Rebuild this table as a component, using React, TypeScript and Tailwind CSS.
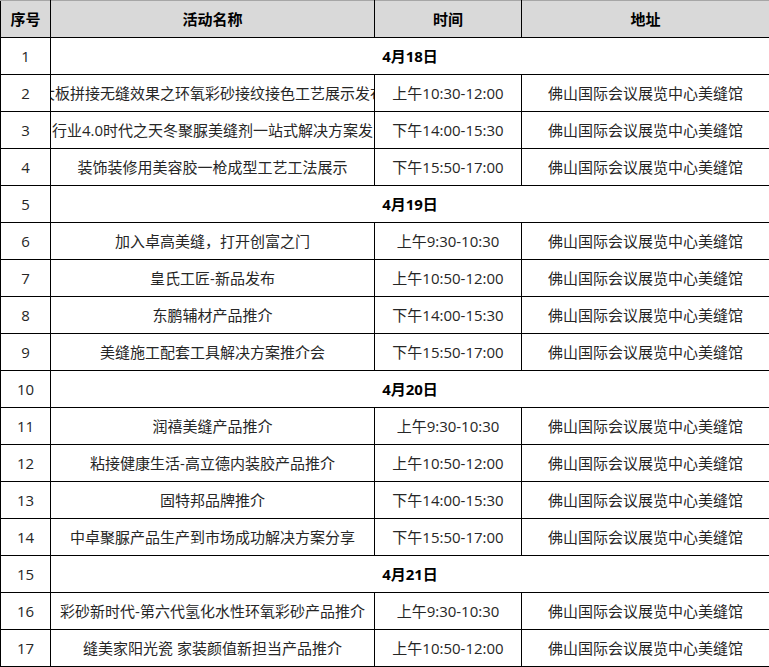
type Row =
  | { no: number; date: string }
  | { no: number; name: string; time: string };

const ADDRESS = '佛山国际会议展览中心美缝馆';

const rows: Row[] = [
  { no: 1, date: '4月18日' },
  { no: 2, name: '大板拼接无缝效果之环氧彩砂接纹接色工艺展示发布', time: '上午10:30-12:00' },
  { no: 3, name: '行业4.0时代之天冬聚脲美缝剂一站式解决方案发', time: '下午14:00-15:30' },
  { no: 4, name: '装饰装修用美容胶一枪成型工艺工法展示', time: '下午15:50-17:00' },
  { no: 5, date: '4月19日' },
  { no: 6, name: '加入卓高美缝，打开创富之门', time: '上午9:30-10:30' },
  { no: 7, name: '皇氏工匠-新品发布', time: '上午10:50-12:00' },
  { no: 8, name: '东鹏辅材产品推介', time: '下午14:00-15:30' },
  { no: 9, name: '美缝施工配套工具解决方案推介会', time: '下午15:50-17:00' },
  { no: 10, date: '4月20日' },
  { no: 11, name: '润禧美缝产品推介', time: '上午9:30-10:30' },
  { no: 12, name: '粘接健康生活-高立德内装胶产品推介', time: '上午10:50-12:00' },
  { no: 13, name: '固特邦品牌推介', time: '下午14:00-15:30' },
  { no: 14, name: '中卓聚脲产品生产到市场成功解决方案分享', time: '下午15:50-17:00' },
  { no: 15, date: '4月21日' },
  { no: 16, name: '彩砂新时代-第六代氢化水性环氧彩砂产品推介', time: '上午9:30-10:30' },
  { no: 17, name: '缝美家阳光瓷 家装颜值新担当产品推介', time: '上午10:50-12:00' },
];

const cell = 'h-[37px] border border-black p-0 align-middle';

export default function App() {
  return (
    <div className="w-[769px] bg-white text-[15px] text-[#262626] [font-family:'Open_Sans','Noto_Sans_CJK_SC',sans-serif]">
      <table className="w-[769px] table-fixed border-collapse">
        <colgroup>
          <col className="w-[50px]" />
          <col className="w-[324px]" />
          <col className="w-[147px]" />
          <col className="w-[248px]" />
        </colgroup>
        <thead>
          <tr className="bg-[#d9d9d9] font-bold text-black">
            <th className={`${cell} border-t-[#a6a6a6]`}>序号</th>
            <th className={`${cell} border-t-[#a6a6a6]`}>活动名称</th>
            <th className={`${cell} border-t-[#a6a6a6]`}>时间</th>
            <th className={`${cell} border-t-[#a6a6a6]`}>地址</th>
          </tr>
        </thead>
        <tbody>
          {rows.map((row) => (
            <tr key={row.no}>
              <td className={`${cell} text-center`}>{row.no}</td>
              {'date' in row ? (
                <td colSpan={3} className={`${cell} text-center font-bold text-black`}>
                  {row.date}
                </td>
              ) : (
                <>
                  <td className={cell}>
                    {/* long names spill past both edges and get clipped */}
                    <div className="flex justify-center overflow-hidden whitespace-nowrap">
                      <span className="shrink-0">{row.name}</span>
                    </div>
                  </td>
                  <td className={`${cell} text-center whitespace-nowrap`}>{row.time}</td>
                  <td className={`${cell} text-center whitespace-nowrap`}>{ADDRESS}</td>
                </>
              )}
            </tr>
          ))}
        </tbody>
      </table>
    </div>
  );
}
